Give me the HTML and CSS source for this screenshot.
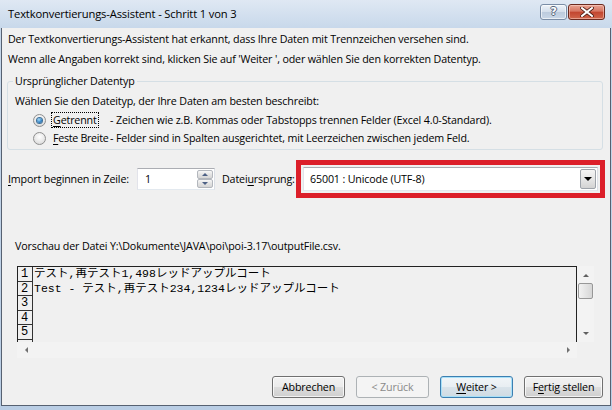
FILE: index.html
```html
<!DOCTYPE html>
<html lang="de">
<head>
<meta charset="utf-8">
<title>Textkonvertierungs-Assistent</title>
<link rel="stylesheet" href="styles.css">
</head>
<body>
<div class="window">
  <div class="titlebar">
    <span class="title">Textkonvertierungs-Assistent - Schritt 1 von 3</span>
    <div class="caption-btns">
      <div class="cbtn help"><span>?</span></div>
      <div class="cbtn close">
        <svg width="14" height="10" viewBox="0 0 14 10">
          <path d="M2 1 L12 9 M12 1 L2 9" stroke="#4a1b12" stroke-width="3.6" stroke-linecap="square"/>
          <path d="M2 1 L12 9 M12 1 L2 9" stroke="#ffffff" stroke-width="2" stroke-linecap="square"/>
        </svg>
      </div>
    </div>
  </div>
  <div class="client">
    <p class="intro">Der Textkonvertierungs-Assistent hat erkannt, dass Ihre Daten mit Trennzeichen versehen sind.</p>
    <p class="intro">Wenn alle Angaben korrekt sind, klicken Sie auf 'Weiter ', oder wählen Sie den korrekten Datentyp.</p>

    <fieldset class="group">
      <legend>Ursprünglicher Datentyp</legend>
      <div class="group-line">Wählen Sie den Dateityp, der Ihre Daten am besten beschreibt:</div>
      <div class="radio-row first">
        <span class="radio checked"></span>
        <span class="rlabel-col"><span class="rlabel focus"><u>G</u>etrennt</span></span>
        <span class="rdesc">- Zeichen wie z.B. Kommas oder Tabstopps trennen Felder (Excel 4.0-Standard).</span>
      </div>
      <div class="radio-row">
        <span class="radio"></span>
        <span class="rlabel-col"><span class="rlabel plain"><u>F</u>este Breite</span></span>
        <span class="rdesc">- Felder sind in Spalten ausgerichtet, mit Leerzeichen zwischen jedem Feld.</span>
      </div>
    </fieldset>

    <div class="import-row">
      <span class="lbl lbl-import"><u>I</u>mport beginnen in Zeile:</span>
      <div class="spin">
        <span class="spin-val">1</span>
        <div class="spin-btns">
          <div class="spin-btn"><span class="tri-up"></span></div>
          <div class="spin-btn"><span class="tri-down"></span></div>
        </div>
      </div>
      <span class="lbl lbl-origin">Datei<u>u</u>rsprung:</span>
      <div class="highlight">
        <div class="combo">
          <span class="combo-val">65001 : Unicode (UTF-8)</span>
          <div class="drop"><span class="tri-down dark"></span></div>
        </div>
      </div>
    </div>

    <div class="preview-label">Vorschau der Datei Y:\Dokumente\JAVA\poi\poi-3.17\outputFile.csv.</div>

    <div class="preview">
      <div class="preview-main">
        <div class="grid">
          <div class="nums">
            <div class="num">1</div>
            <div class="num">2</div>
            <div class="num">3</div>
            <div class="num">4</div>
            <div class="num">5</div>
          </div>
          <div class="data">
            <div class="drow">テスト,再テスト1,498レッドアップルコート</div>
            <div class="drow">Test - テスト,再テスト234,1234レッドアップルコート</div>
            <div class="drow"></div>
            <div class="drow"></div>
            <div class="drow"></div>
          </div>
        </div>
        <div class="vscroll">
          <span class="arrow-up"></span>
          <div class="thumb"></div>
          <span class="arrow-down"></span>
        </div>
      </div>
      <div class="hscroll">
        <span class="arrow-left"></span>
        <span class="arrow-right"></span>
      </div>
    </div>

    <div class="buttons">
      <div class="btn">Abbrechen</div>
      <div class="btn disabled">&lt; Zurück</div>
      <div class="btn default"><u>W</u>eiter &gt;</div>
      <div class="btn wide">F<u>e</u>rtig stellen</div>
    </div>
  </div>
</div>
</body>
</html>
```
FILE: styles.css
```css
* { box-sizing: border-box; }
html, body { margin: 0; padding: 0; }
body {
  width: 612px;
  height: 410px;
  overflow: hidden;
  font-family: "Open Sans", "Noto Sans", sans-serif;
  font-size: 10.7px;
  letter-spacing: -0.15px;
  color: #000;
  background: #c3d5ea;
}
u { text-decoration: underline; text-underline-offset: 2px; }

.window {
  width: 612px;
  height: 410px;
  display: flex;
  flex-direction: column;
  background: linear-gradient(#dfe8f3, #c6d7ea 30px, #b9cde4);
}

/* title bar */
.titlebar {
  height: 28px;
  display: flex;
  align-items: flex-start;
  padding-left: 8px;
  flex: none;
}
.title { line-height: 28px; font-size: 11.2px; color: #000; }
.caption-btns {
  margin-left: auto;
  margin-right: 7px;
  margin-top: 4px;
  display: flex;
}
.cbtn {
  height: 16px;
  display: flex;
  align-items: center;
  justify-content: center;
  border-radius: 3px;
}
.help {
  width: 27px;
  border: 1px solid #7a8da6;
  background: linear-gradient(#eef3f9, #d3deeb 50%, #bccbdd 51%, #c9d7e7);
  box-shadow: inset 0 0 0 1px rgba(255,255,255,0.6);
  margin-right: 1px;
}
.help span {
  font-family: "DejaVu Sans", sans-serif;
  font-weight: bold;
  font-size: 11px;
  color: #fff;
  line-height: 14px;
  text-shadow: 1px 0 0 #55657a, -1px 0 0 #55657a, 0 1px 0 #55657a, 0 -1px 0 #55657a;
}
.close {
  width: 37px;
  border: 1px solid #6b2a1f;
  background: linear-gradient(#e8a493, #d67561 45%, #c2452f 50%, #d0664c);
  box-shadow: inset 0 0 0 1px rgba(255,220,210,0.5);
}

/* client area */
.client {
  flex: none;
  height: 378px;
  margin: 0 1px;
  background: #f0f0f0;
  border: 1px solid #566171;
  border-top: none;
  display: flex;
  flex-direction: column;
}
.intro {
  margin: 0;
  padding-left: 6px;
  line-height: 20px;
  white-space: nowrap;
}
.intro:first-child { margin-top: 1px; }

/* group box */
.group {
  margin: 4px 7px 0 5px;
  padding: 0 8px 2px 7px;
  border: 1px solid #d5dfe5;
  border-radius: 3px;
  min-width: 0;
}
.group legend {
  padding: 0 2px;
  margin-left: -2px;
  line-height: 16px;
}
.group-line {
  margin-top: 3px;
  line-height: 18px;
  white-space: nowrap;
}
.radio-row {
  display: flex;
  align-items: center;
  height: 18px;
  white-space: nowrap;
}
.radio-row.first { margin-top: 1px; }
.radio {
  width: 13px;
  height: 13px;
  margin-left: 18px;
  border-radius: 50%;
  border: 1px solid #8f8f8f;
  background: radial-gradient(circle at 50% 35%, #ffffff, #e6e6e6 60%, #cfcfcf);
  display: flex;
  align-items: center;
  justify-content: center;
  flex: none;
}
.radio.checked::after {
  content: "";
  width: 5px;
  height: 5px;
  border-radius: 50%;
  background: radial-gradient(circle at 40% 35%, #a8dcf8, #2f7fc2 60%, #174f86);
  box-shadow: 0 0 0 1px #3e6f97;
}
.rlabel-col { width: 59px; margin-left: 5px; flex: none; }
.rlabel {
  display: inline-block;
  line-height: 14px;
}
.rlabel.focus { border: 1px dotted #000; padding: 0 1px; }
.rlabel.plain { margin-left: 2px; letter-spacing: -0.3px; }
.rdesc { margin-left: 0; }

/* import row */
.import-row {
  display: flex;
  align-items: center;
  margin-top: 10px;
  height: 38px;
}
.lbl { white-space: nowrap; }
.lbl-import { width: 135px; padding-left: 6px; flex: none; }
.lbl-origin { width: 81px; padding-left: 7px; flex: none; }
.spin {
  width: 78px;
  height: 22px;
  background: #fff;
  border: 1px solid #abadb3;
  border-left-color: #e2e3ea;
  border-right-color: #dbdfe6;
  border-bottom-color: #e3e9ef;
  display: flex;
  align-items: center;
  flex: none;
}
.spin-val { padding-left: 7px; flex: 1; }
.spin-btns {
  width: 16px;
  height: 18px;
  margin-right: 1px;
  display: flex;
  flex-direction: column;
}
.spin-btn {
  flex: 1;
  border: 1px solid #b3b7bd;
  border-radius: 2px;
  background: linear-gradient(#f7f7f7, #e3e3e3 50%, #d6d6d6);
  display: flex;
  align-items: center;
  justify-content: center;
}
.tri-up, .tri-down {
  width: 0; height: 0;
  border-left: 3px solid transparent;
  border-right: 3px solid transparent;
}
.tri-up { border-bottom: 3px solid #4d6185; }
.tri-down { border-top: 3px solid #4d6185; }
.tri-down.dark {
  border-left-width: 4px;
  border-right-width: 4px;
  border-top: 4px solid #000;
}
.highlight {
  width: 309px;
  height: 38px;
  border: 5px solid #dc1f2a;
  padding: 2px;
  flex: none;
}
.combo {
  height: 24px;
  background: #fff;
  border: 1px solid #abadb3;
  border-left-color: #e2e3ea;
  border-right-color: #dbdfe6;
  border-bottom-color: #e3e9ef;
  display: flex;
  align-items: center;
}
.combo-val { flex: 1; padding-left: 6px; white-space: nowrap; }
.drop {
  width: 16px;
  height: 20px;
  margin-right: 1px;
  border: 1px solid #9ea3aa;
  border-radius: 2px;
  background: linear-gradient(#f4f4f4, #e6e6e6 50%, #d3d3d3);
  display: flex;
  align-items: center;
  justify-content: center;
}

/* preview */
.preview-label {
  margin-top: 40px;
  padding-left: 13px;
  line-height: 16px;
  white-space: nowrap;
}
.preview {
  margin-top: 12px;
  margin-left: 15px;
  width: 577px;
}
.preview-main { display: flex; height: 76px; }
.grid {
  width: 560px;
  height: 76px;
  border-top: 1px solid #222;
  border-left: 1px solid #222;
  border-right: 1px solid #222;
  display: flex;
  background: #f0f0f0;
  overflow: hidden;
}
.nums {
  width: 15px;
  border-right: 1px solid #333;
  flex: none;
}
.num, .drow {
  height: 14.5px;
  font-family: "Liberation Mono", "Noto Sans CJK JP", monospace;
  font-size: 12px;
  line-height: 14px;
  letter-spacing: 0;
}
.num {
  border-bottom: 1px solid #333;
  padding-left: 3px;
}
.data { flex: 1; padding-left: 1px; }
.drow { white-space: nowrap; font-size: 11.5px; }
.vscroll {
  width: 17px;
  height: 76px;
  display: flex;
  flex-direction: column;
  align-items: center;
  background: #f3f3f3;
}
.arrow-up, .arrow-down {
  width: 0; height: 0;
  border-left: 3px solid transparent;
  border-right: 3px solid transparent;
}
.arrow-up { border-bottom: 3px solid #606060; margin-top: 8px; }
.thumb {
  margin-top: 6px;
  width: 15px;
  height: 16px;
  border: 1px solid #979797;
  border-radius: 2px;
  background: linear-gradient(90deg, #f2f2f2, #e4e4e4 50%, #d6d6d6);
}
.arrow-down { border-top: 3px solid #606060; margin-top: auto; margin-bottom: 7px; }
.hscroll {
  width: 560px;
  height: 16px;
  display: flex;
  align-items: center;
  justify-content: space-between;
  padding: 0 7px 0 8px;
  background: #f3f3f3;
}
.arrow-left, .arrow-right {
  width: 0; height: 0;
  border-top: 3px solid transparent;
  border-bottom: 3px solid transparent;
}
.arrow-left { border-right: 3px solid #707070; }
.arrow-right { border-left: 3px solid #707070; }

/* buttons */
.buttons {
  margin-top: 18px;
  display: flex;
  justify-content: flex-end;
  gap: 11px;
  padding-right: 7px;
}
.btn {
  width: 73px;
  height: 22px;
  border: 1px solid #707070;
  border-radius: 3px;
  background: linear-gradient(#f2f2f2, #ebebeb 50%, #dddddd 51%, #cfcfcf);
  box-shadow: inset 0 0 0 1px rgba(255,255,255,0.75);
  display: flex;
  align-items: center;
  justify-content: center;
  white-space: nowrap;
  line-height: 20px;
}
.btn.wide { width: 79px; }
.btn.disabled {
  border-color: #adb2b5;
  background: #f4f4f4;
  color: #8a8a8a;
  box-shadow: none;
}
.btn.default {
  border-color: #3c7fb1;
  box-shadow: inset 0 0 0 1px #a8e0f8;
  background: linear-gradient(#f1f5f8, #e8eef2 50%, #d9e3ea 51%, #cfdbe3);
}
```
